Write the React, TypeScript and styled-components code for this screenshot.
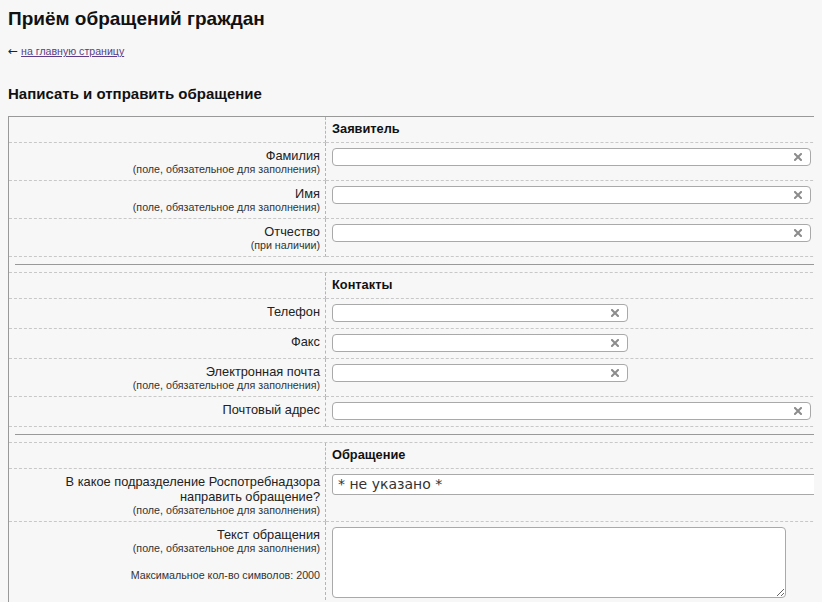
import React from "react"
import styled, { createGlobalStyle } from "styled-components"

const GlobalStyle = createGlobalStyle`
html, body {
    overflow: hidden;
}
body {
    margin: 8px;
    background: #f7f7f7;
    font-family: "Liberation Sans", Arial, sans-serif;
    color: #222;
}
`

const Title = styled.h1`
margin: 0;
font-size: 19px;
line-height: 22px;
font-weight: 700;
color: #111;
`

const BackLine = styled.div`
margin-top: 15px;
font-size: 10.6px;
line-height: 13px;
color: #333;

a {
    color: #5c3d84;
    text-decoration: underline;
}
`

const Arrow = styled.span`
font-family: "DejaVu Sans", sans-serif;
font-size: 12px;
color: #222;
margin-right: 3px;
`

const SubTitle = styled.h2`
margin: 27px 0 14px;
font-size: 15px;
line-height: 17px;
font-weight: 700;
color: #111;
`

const FormTable = styled.table`
width: 860px;
table-layout: fixed;
border-collapse: separate;
border-spacing: 0;
border-top: 1px solid #999;
border-left: 1px solid #999;
`

const LabelCell = styled.td`
box-sizing: border-box;
width: 317px;
padding: 5px 5px 5px 0;
text-align: right;
vertical-align: top;
border-right: 1px dashed #b5b5b5;
border-bottom: 1px dashed #c8c8c8;
`

const FieldCell = styled.td`
padding: 5px 0 6px 6px;
vertical-align: top;
border-bottom: 1px dashed #c8c8c8;
`

const GroupTitle = styled.div`
font-size: 12.8px;
line-height: 14px;
font-weight: 700;
color: #111;
`

const Label = styled.div`
font-size: 12.8px;
line-height: 15px;
color: #222;
`

const Hint = styled.div<{ $gap?: number }>`
font-size: 10.7px;
line-height: 12px;
color: #333;
margin-top: ${p => p.$gap ?? 0}px;
`

const DividerCell = styled.td`
padding: 7px 0 7px 6px;
border-bottom: 1px dashed #c8c8c8;
`

const Rule = styled.div`
height: 1px;
background: #999;
`

const FieldWrap = styled.span<{ $w: number }>`
position: relative;
display: block;
width: ${p => p.$w}px;
`

const TextInput = styled.input`
box-sizing: border-box;
display: block;
width: 100%;
height: 18px;
margin: 0;
padding: 0 22px 0 4px;
border: 1px solid #a9a9a9;
border-radius: 4px;
background: #fff;
font-family: "Liberation Sans", Arial, sans-serif;
font-size: 12px;
outline: none;
`

const ClearIcon = styled.svg`
position: absolute;
right: 9px;
top: 5px;
width: 8px;
height: 8px;
`

const Select = styled.div`
box-sizing: border-box;
width: 520px;
height: 21px;
padding: 0 5px;
border: 1px solid #a9a9a9;
border-radius: 3px;
background: #fff;
font-family: "DejaVu Sans", Verdana, sans-serif;
font-size: 14px;
line-height: 19px;
color: #333;
`

const TextArea = styled.textarea`
box-sizing: border-box;
display: block;
width: 454px;
height: 71px;
margin: 0;
border: 1px solid #a9a9a9;
border-radius: 4px;
background: #fff;
font-family: "Liberation Sans", Arial, sans-serif;
`

type Field = { label: string; hint?: string; width: number }

const Clear = () => (
    <ClearIcon viewBox="0 0 8 8">
        <path d="M1 1 L7 7 M7 1 L1 7" stroke="#8c8c8c" strokeWidth="2" strokeLinecap="square" />
    </ClearIcon>
)

const InputRow = ({ label, hint, width }: Field) => (
    <tr>
        <LabelCell>
            <Label>{label}</Label>
            {hint && <Hint>{hint}</Hint>}
        </LabelCell>
        <FieldCell>
            <FieldWrap $w={width}>
                <TextInput type="text" />
                <Clear />
            </FieldWrap>
        </FieldCell>
    </tr>
)

const GroupRow = ({ title }: { title: string }) => (
    <tr>
        <LabelCell />
        <FieldCell>
            <GroupTitle>{title}</GroupTitle>
        </FieldCell>
    </tr>
)

const Divider = () => (
    <tr>
        <DividerCell colSpan={2}>
            <Rule />
        </DividerCell>
    </tr>
)

const REQUIRED = "(поле, обязательное для заполнения)"

const applicant: Field[] = [
    { label: "Фамилия", hint: REQUIRED, width: 479 },
    { label: "Имя", hint: REQUIRED, width: 479 },
    { label: "Отчество", hint: "(при наличии)", width: 479 },
]

const contacts: Field[] = [
    { label: "Телефон", width: 296 },
    { label: "Факс", width: 296 },
    { label: "Электронная почта", hint: REQUIRED, width: 296 },
    { label: "Почтовый адрес", width: 479 },
]

export default function App() {
    return (
        <>
            <GlobalStyle />
            <Title>Приём обращений граждан</Title>
            <BackLine>
                <Arrow>←</Arrow><a href="#">на главную страницу</a>
            </BackLine>
            <SubTitle>Написать и отправить обращение</SubTitle>

            <FormTable>
                <tbody>
                    <GroupRow title="Заявитель" />
                    {applicant.map(f => <InputRow key={f.label} {...f} />)}
                    <Divider />
                    <GroupRow title="Контакты" />
                    {contacts.map(f => <InputRow key={f.label} {...f} />)}
                    <Divider />
                    <GroupRow title="Обращение" />
                    <tr>
                        <LabelCell>
                            <Label>В какое подразделение Роспотребнадзора<br />направить обращение?</Label>
                            <Hint>{REQUIRED}</Hint>
                        </LabelCell>
                        <FieldCell>
                            <Select>* не указано *</Select>
                        </FieldCell>
                    </tr>
                    <tr>
                        <LabelCell>
                            <Label>Текст обращения</Label>
                            <Hint>{REQUIRED}</Hint>
                            <Hint $gap={15}>Максимальное кол-во символов: 2000</Hint>
                        </LabelCell>
                        <FieldCell>
                            <TextArea />
                        </FieldCell>
                    </tr>
                </tbody>
            </FormTable>
        </>
    )
}
